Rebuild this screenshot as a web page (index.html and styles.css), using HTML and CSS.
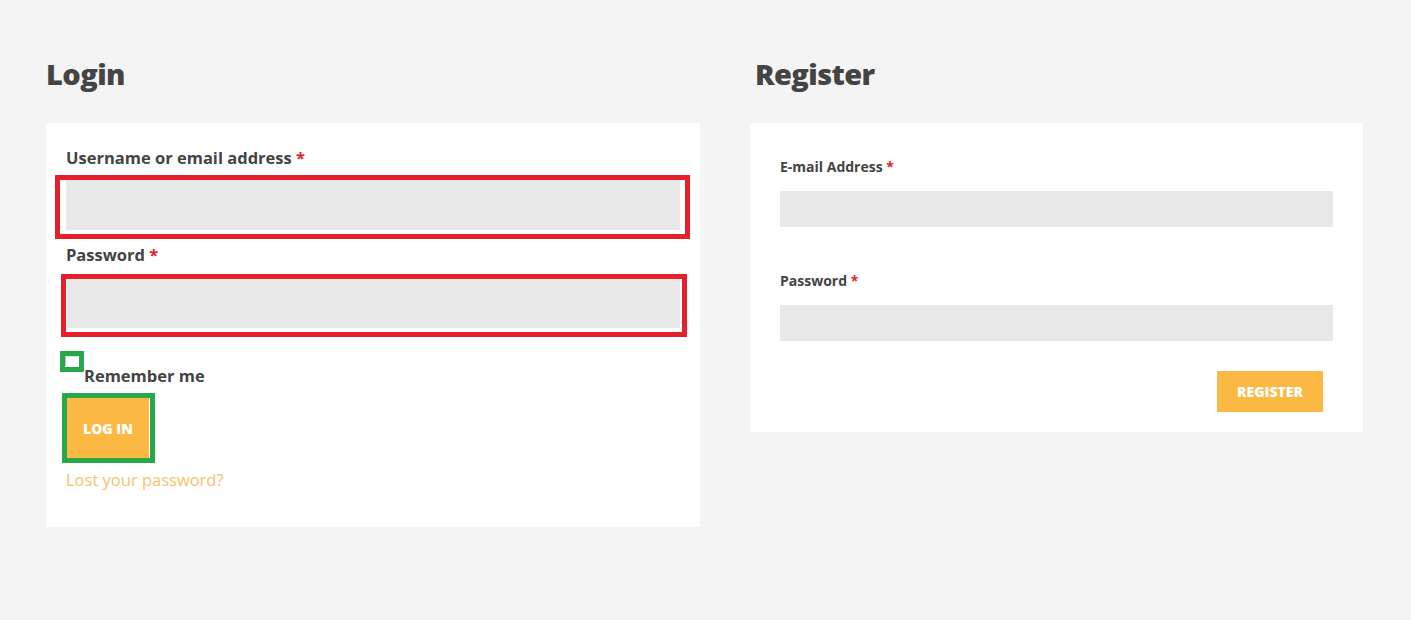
FILE: index.html
```html
<!DOCTYPE html>
<html lang="en">
<head>
<meta charset="utf-8">
<title>My account</title>
<link rel="stylesheet" href="styles.css">
</head>
<body>
<div class="page">
  <section class="col col-login">
    <h2 class="title">Login</h2>
    <form class="panel panel-login">
      <label class="lbl lbl-first">Username or email address <span class="req">*</span></label>
      <div class="err err-user"><div class="field"></div></div>
      <label class="lbl lbl-pass">Password <span class="req">*</span></label>
      <div class="err err-pass"><div class="field field-pass"></div></div>
      <div class="remember">
        <span class="ok-check"><span class="box"></span></span>
        <span class="remember-text">Remember me</span>
      </div>
      <div class="ok-btn"><span class="btn btn-login">LOG IN</span></div>
      <a class="lost">Lost your password?</a>
    </form>
  </section>
  <section class="col col-register">
    <h2 class="title title-reg">Register</h2>
    <form class="panel panel-reg">
      <label class="rlbl">E-mail Address <span class="req">*</span></label>
      <div class="rfield"></div>
      <label class="rlbl rlbl-pass">Password <span class="req">*</span></label>
      <div class="rfield"></div>
      <div class="reg-actions"><span class="btn btn-reg">REGISTER</span></div>
    </form>
  </section>
</div>
</body>
</html>
```
FILE: styles.css
```css
html, body {
  margin: 0;
  padding: 0;
  background: #f4f4f4;
}
body {
  font-family: "Open Sans", "Liberation Sans", sans-serif;
  color: #444;
}
.page {
  display: flex;
  gap: 50px;
  padding: 54px 0 0 46px;
}
.col-login { width: 654px; }
.col-register { width: 613px; }
.title {
  margin: 0 0 29px 0;
  font-size: 29px;
  line-height: 40px;
  font-weight: 800;
  letter-spacing: -0.6px;
  color: #444;
}
.title-reg { margin-left: 5px; }
.panel {
  background: #fff;
  display: block;
}
.panel-login {
  padding: 23px 20px 35px 20px;
}
.lbl {
  display: block;
  font-size: 16.5px;
  line-height: 24px;
  font-weight: 700;
  color: #444;
}
.lbl-first { margin-bottom: 5px; }
.lbl-pass { margin: 4px 0 7px 0; }
.req { color: #e2222b; }
.err {
  border: 5px solid #e5202a;
  background: #fff;
}
.err-user {
  margin: 0 -10px 0 -11px;
  padding: 0 5px 4px 6px;
}
.err-pass {
  margin: 0 -7px 0 -5px;
  padding: 0 2px 4px 1px;
}
.field {
  height: 50px;
  background: #e8e8e8;
}
.field-pass { height: 49px; }
.remember {
  display: flex;
  align-items: flex-start;
  margin: 14px 0 0 -6px;
}
.ok-check {
  display: block;
  border: 5px solid #29a84b;
  background: #fff;
  width: 14px;
  height: 11px;
}
.box {
  display: block;
  width: 13px;
  height: 10px;
  border-left: 1px solid #bdbdbd;
  border-top: 1px solid #e0e0e0;
  box-sizing: border-box;
}
.remember-text {
  margin-top: 13px;
  font-size: 16.5px;
  line-height: 24px;
  font-weight: 700;
}
.ok-btn {
  display: inline-block;
  margin: 5px 0 0 -4px;
  border: 5px solid #29a84b;
  padding-right: 1px;
  background: #fff;
  vertical-align: top;
}
.btn {
  display: flex;
  align-items: center;
  justify-content: center;
  background: #fbb944;
  color: #fff;
  font-weight: 800;
  font-size: 14px;
  text-transform: uppercase;
}
.btn-login {
  width: 82px;
  height: 60px;
}
.lost {
  display: block;
  margin-top: 5px;
  font-size: 16.5px;
  line-height: 24px;
  color: #f5c26c;
}
.panel-reg {
  padding: 34px 30px 20px 30px;
}
.rlbl {
  display: block;
  font-size: 14px;
  line-height: 20px;
  font-weight: 700;
  color: #444;
  margin-bottom: 14px;
}
.rlbl-pass { margin-top: 44px; }
.rfield {
  height: 36px;
  background: #e8e8e8;
}
.reg-actions {
  display: flex;
  justify-content: flex-end;
  padding-right: 10px;
  margin-top: 30px;
}
.btn-reg {
  width: 106px;
  height: 41px;
}
```
